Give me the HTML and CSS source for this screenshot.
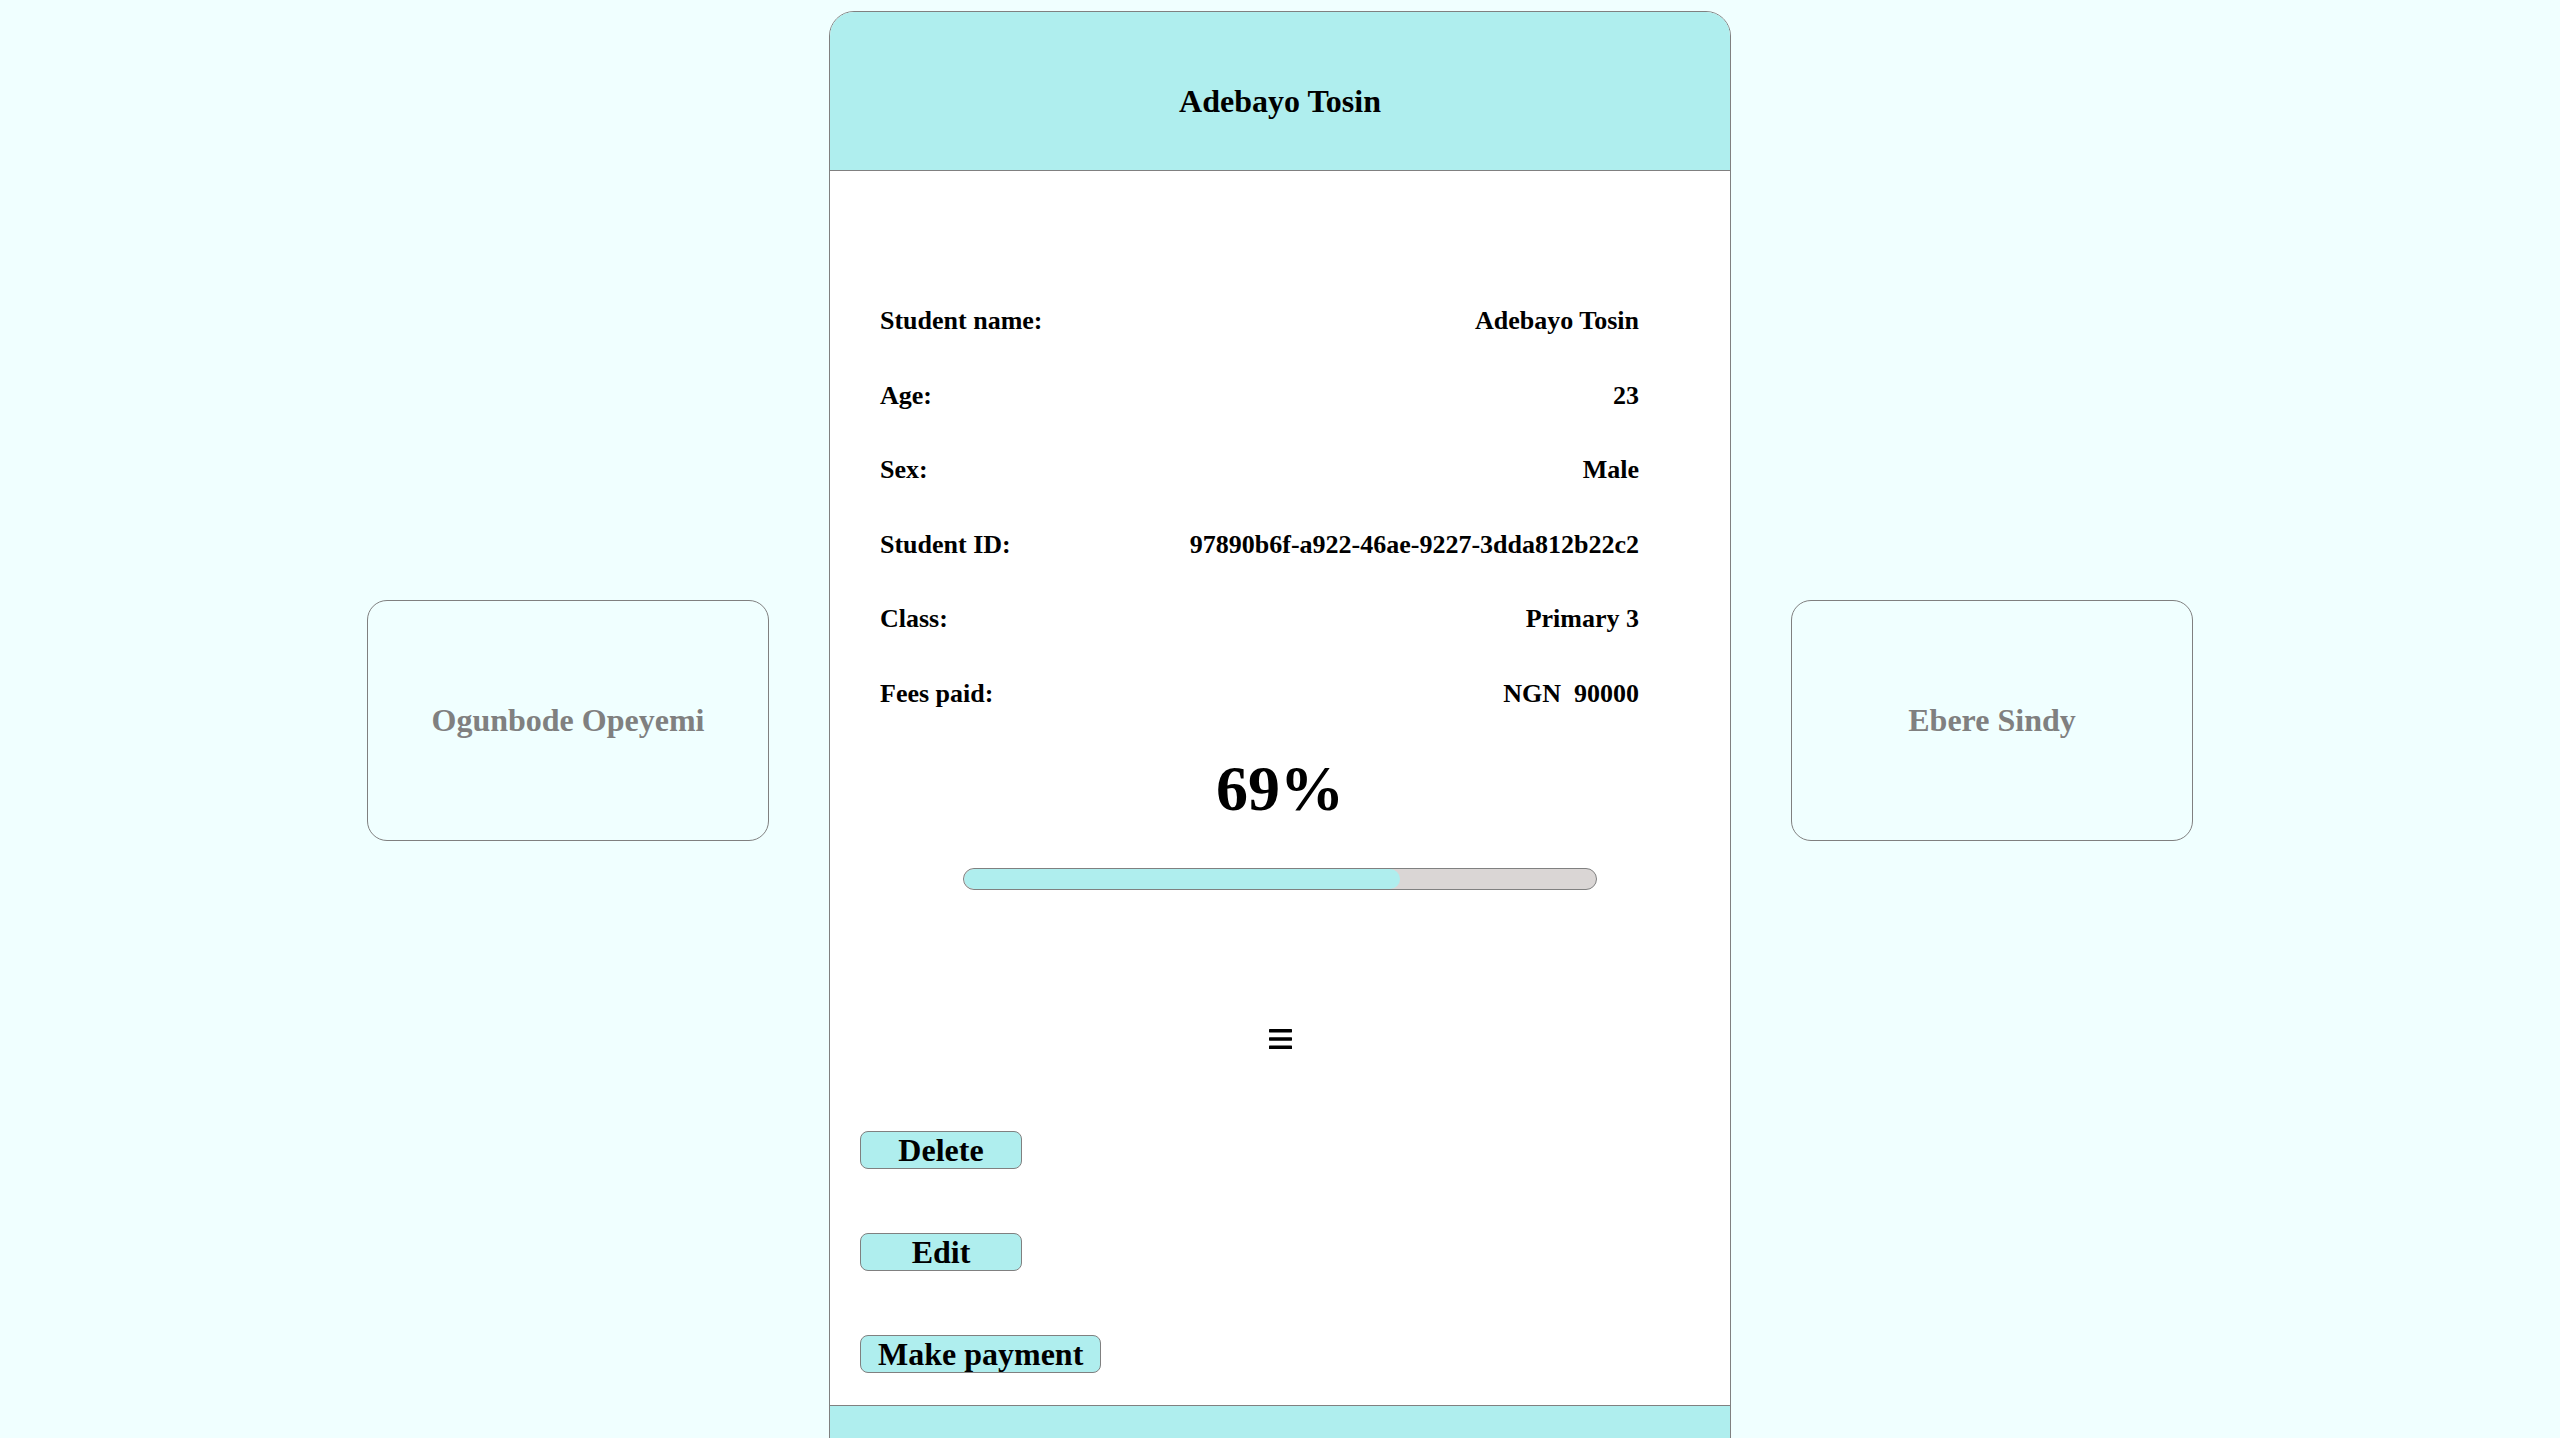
FILE: index.html
```html
<!DOCTYPE html>
<html lang="en">
<head>
<meta charset="utf-8">
<title>Students</title>
<link rel="stylesheet" href="styles.css">
</head>
<body>
<div class="carousel">
  <div class="side-card"><span class="side-name">Ogunbode Opeyemi</span></div>
  <div class="card">
    <header class="card-header"><h1 class="card-title">Adebayo Tosin</h1></header>
    <main class="card-body">
      <div class="details">
        <div class="row"><span>Student name:</span><span>Adebayo Tosin</span></div>
        <div class="row"><span>Age:</span><span>23</span></div>
        <div class="row"><span>Sex:</span><span>Male</span></div>
        <div class="row"><span>Student ID:</span><span>97890b6f-a922-46ae-9227-3dda812b22c2</span></div>
        <div class="row"><span>Class:</span><span>Primary 3</span></div>
        <div class="row"><span>Fees paid:</span><span>NGN&nbsp; 90000</span></div>
      </div>
      <div class="percent">69%</div>
      <div class="bar"><div class="bar-fill" style="width: 69%"></div></div>
      <div class="menu-icon">
        <svg width="23" height="20" viewBox="0 0 23 20" aria-hidden="true">
          <rect x="0" y="0" width="23" height="3.4" rx="0.6" fill="#000"/>
          <rect x="0" y="8.3" width="23" height="3.4" rx="0.6" fill="#000"/>
          <rect x="0" y="16.6" width="23" height="3.4" rx="0.6" fill="#000"/>
        </svg>
      </div>
      <div class="actions">
        <button class="btn">Delete</button>
        <button class="btn">Edit</button>
        <button class="btn">Make payment</button>
      </div>
    </main>
    <footer class="card-footer"></footer>
  </div>
  <div class="side-card"><span class="side-name">Ebere Sindy</span></div>
</div>
</body>
</html>
```
FILE: styles.css
```css
html, body {
  margin: 0;
  padding: 0;
  height: 100%;
  overflow: hidden;
}

body {
  background: #f0ffff;
  font-family: "Liberation Serif", "Times New Roman", serif;
  color: #000;
}

.carousel {
  box-sizing: border-box;
  height: 100vh;
  padding-top: 3px;
  display: flex;
  justify-content: center;
  align-items: center;
  gap: 60px;
}

.side-card {
  box-sizing: border-box;
  width: 402px;
  height: 241px;
  border: 1px solid #808080;
  border-radius: 20px;
  background: #f0ffff;
  display: flex;
  align-items: center;
  justify-content: center;
}

.side-name {
  font-size: 32px;
  font-weight: bold;
  color: #808080;
}

.card {
  box-sizing: border-box;
  width: 902px;
  align-self: flex-start;
  margin-top: 8px;
  border: 1px solid #808080;
  border-radius: 25px;
  overflow: hidden;
  background: #fff;
  display: flex;
  flex-direction: column;
}

.card-header {
  box-sizing: border-box;
  height: 159px;
  padding-top: 71px;
  background: #afeeee;
  border-bottom: 1px solid #808080;
}

.card-title {
  margin: 0;
  font-size: 32px;
  line-height: 37px;
  font-weight: bold;
  text-align: center;
}

.card-body {
  display: flex;
  flex-direction: column;
  padding: 135px 0 32px 0;
}

.details {
  display: flex;
  flex-direction: column;
  gap: 44.5px;
  padding: 0 91px 0 50px;
}

.row {
  display: flex;
  justify-content: space-between;
  font-size: 26px;
  line-height: 30px;
  font-weight: bold;
}

.percent {
  margin-top: 43px;
  font-size: 64px;
  line-height: 74px;
  font-weight: bold;
  text-align: center;
}

.bar {
  box-sizing: border-box;
  align-self: center;
  width: 634px;
  height: 22px;
  margin-top: 42.5px;
  border: 1px solid #808080;
  border-radius: 11px;
  background: #dad6d5;
  overflow: hidden;
}

.bar-fill {
  height: 100%;
  background: #afeeee;
  border-radius: 10px;
}

.menu-icon {
  align-self: center;
  margin-top: 139px;
  height: 20px;
}

.menu-icon svg {
  display: block;
}

.actions {
  margin-top: 82px;
  padding-left: 30px;
  display: flex;
  flex-direction: column;
  align-items: flex-start;
  gap: 64px;
}

.btn {
  box-sizing: border-box;
  min-width: 162px;
  height: 38px;
  padding: 0 17px;
  border: 1px solid #808080;
  border-radius: 8px;
  background: #afeeee;
  font-family: "Liberation Serif", "Times New Roman", serif;
  font-size: 32px;
  line-height: 36px;
  font-weight: bold;
  color: #000;
}

.card-footer {
  height: 80px;
  flex-shrink: 0;
  background: #afeeee;
  border-top: 1px solid #808080;
}
```
